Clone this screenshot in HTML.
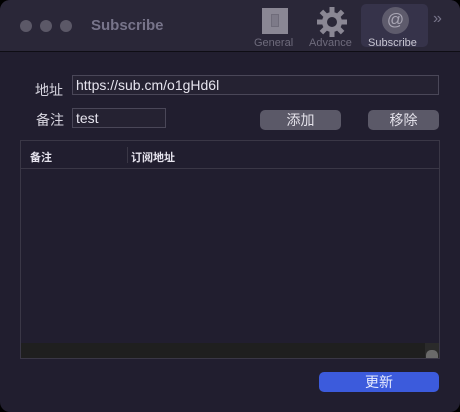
<!DOCTYPE html>
<html><head><meta charset="utf-8"><style>
*{margin:0;padding:0;box-sizing:border-box}
body{width:460px;height:412px;background:#000;font-family:"Liberation Sans","Noto Sans CJK SC",sans-serif;overflow:hidden}
.win{position:absolute;left:0;top:0;width:460px;height:412px;background:#211e2f;border-radius:10px;overflow:hidden}
.tb{position:absolute;left:0;top:0;width:460px;height:52px;background:#2a2738;border-bottom:1px solid #0e0d14}
.dot{position:absolute;top:20px;width:12px;height:12px;border-radius:50%;background:#5b5867}
.t{position:absolute;left:91px;top:17px;font-size:15px;font-weight:bold;color:#77748a}
.lbl{position:absolute;top:36px;font-size:11px;color:#6e6b7c}
.ab{position:absolute;font-size:14px;color:#d8d6e0}
.in{position:absolute;height:20px;border:1px solid #4a4758;background:#252232;color:#e6e4ee;font-size:14px;padding:1px 3px;line-height:16px}
.btn{position:absolute;height:20px;border-radius:5px;background:#5b5968;color:#e4e2ea;font-size:14px;text-align:center;line-height:20px}
</style></head><body><div class="win">
<div class="tb">
<div class="dot" style="left:20px"></div><div class="dot" style="left:40px"></div><div class="dot" style="left:60px"></div>
<div class="t">Subscribe</div>
<div style="position:absolute;left:262px;top:8px;width:26px;height:26px;background:#8a8794"><div style="position:absolute;left:9px;top:6px;width:8px;height:13px;border:1px solid #6f6c7a;background:#7d7a88"></div></div>
<div class="lbl" style="left:254px;top:37px">General</div>
<svg style="position:absolute;left:316px;top:6px" width="32" height="32" viewBox="0 0 32 32"><g fill="#8a8794"><circle cx="16" cy="16" r="10"/><g id="tt"><rect x="13.5" y="1" width="5" height="6"/></g><use href="#tt" transform="rotate(45 16 16)"/><use href="#tt" transform="rotate(90 16 16)"/><use href="#tt" transform="rotate(135 16 16)"/><use href="#tt" transform="rotate(180 16 16)"/><use href="#tt" transform="rotate(225 16 16)"/><use href="#tt" transform="rotate(270 16 16)"/><use href="#tt" transform="rotate(315 16 16)"/></g><circle cx="16" cy="16" r="5" fill="#2a2738"/></svg>
<div class="lbl" style="left:309px;top:37px">Advance</div>
<div style="position:absolute;left:361px;top:4px;width:67px;height:43px;background:#36334a;border-radius:5px"></div>
<div style="position:absolute;left:382px;top:7px;width:27px;height:27px;border-radius:50%;background:#5e5b6c;color:#a9a6b4;font-size:17px;text-align:center;line-height:26px">@</div>
<div class="lbl" style="left:368px;top:37px;color:#c8c6d2">Subscribe</div>
<div style="position:absolute;left:433px;top:10px;color:#77748a;font-size:16px">»</div>
</div>
<div class="ab" style="left:35px;top:80px">地址</div>
<div class="in" style="left:72px;top:75px;width:367px">https://sub.cm/o1gHd6l</div>
<div class="ab" style="left:36px;top:110px">备注</div>
<div class="in" style="left:72px;top:108px;width:94px">test</div>
<div class="btn" style="left:260px;top:110px;width:81px">添加</div>
<div class="btn" style="left:368px;top:110px;width:71px">移除</div>
<div style="position:absolute;left:20px;top:140px;width:420px;height:219px;border:1px solid #3a3746;background:#211e2f">
<div style="position:absolute;left:0;top:0;width:418px;height:28px;border-bottom:1px solid #3a3746"></div>
<div style="position:absolute;left:9px;top:8px;font-size:11px;font-weight:bold;color:#e6e4ee">备注</div>
<div style="position:absolute;left:106px;top:6px;width:1px;height:16px;background:#3a3746"></div>
<div style="position:absolute;left:110px;top:8px;font-size:11px;font-weight:bold;color:#e6e4ee">订阅地址</div>
<div style="position:absolute;left:0;top:202px;width:418px;height:15px;background:#1f1f1f"></div>
<div style="position:absolute;left:404px;top:202px;width:14px;height:15px;background:#2a2a2a"></div>
<div style="position:absolute;left:405px;top:209px;width:12px;height:8px;border-radius:5px 5px 0 0;background:#6a6a6a"></div>
</div>
<div class="btn" style="left:319px;top:372px;width:120px;background:#3c5bdc;color:#e8ecff">更新</div>
</div></body></html>
